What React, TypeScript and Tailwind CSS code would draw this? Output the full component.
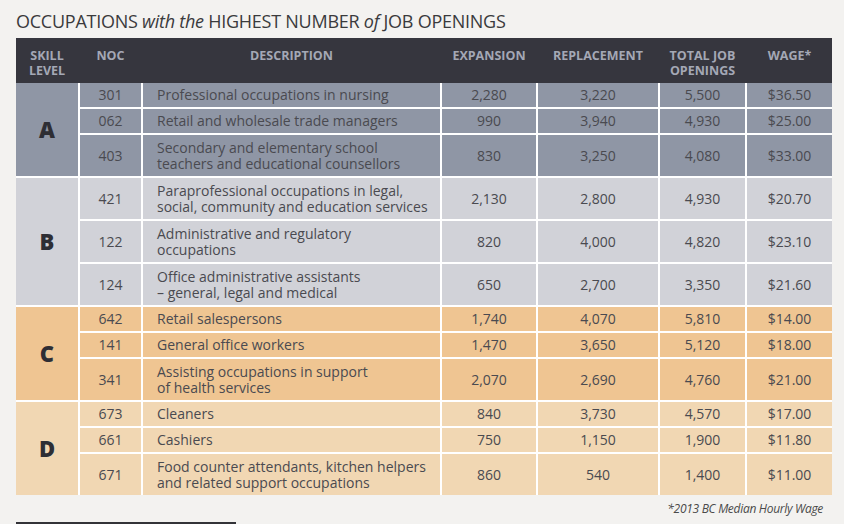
const font = { fontFamily: '"Open Sans", "Liberation Sans", sans-serif' };

type Row = { noc: string; desc: string[]; exp: string; rep: string; total: string; wage: string };

const groups: { level: string; bg: string; rows: Row[] }[] = [
  {
    level: 'A',
    bg: 'bg-[#8f96a5]',
    rows: [
      { noc: '301', desc: ['Professional occupations in nursing'], exp: '2,280', rep: '3,220', total: '5,500', wage: '$36.50' },
      { noc: '062', desc: ['Retail and wholesale trade managers'], exp: '990', rep: '3,940', total: '4,930', wage: '$25.00' },
      { noc: '403', desc: ['Secondary and elementary school', 'teachers and educational counsellors'], exp: '830', rep: '3,250', total: '4,080', wage: '$33.00' },
    ],
  },
  {
    level: 'B',
    bg: 'bg-[#d1d2d8]',
    rows: [
      { noc: '421', desc: ['Paraprofessional occupations in legal,', 'social, community and education services'], exp: '2,130', rep: '2,800', total: '4,930', wage: '$20.70' },
      { noc: '122', desc: ['Administrative and regulatory', 'occupations'], exp: '820', rep: '4,000', total: '4,820', wage: '$23.10' },
      { noc: '124', desc: ['Office administrative assistants', '– general, legal and medical'], exp: '650', rep: '2,700', total: '3,350', wage: '$21.60' },
    ],
  },
  {
    level: 'C',
    bg: 'bg-[#efc592]',
    rows: [
      { noc: '642', desc: ['Retail salespersons'], exp: '1,740', rep: '4,070', total: '5,810', wage: '$14.00' },
      { noc: '141', desc: ['General office workers'], exp: '1,470', rep: '3,650', total: '5,120', wage: '$18.00' },
      { noc: '341', desc: ['Assisting occupations in support', 'of health services'], exp: '2,070', rep: '2,690', total: '4,760', wage: '$21.00' },
    ],
  },
  {
    level: 'D',
    bg: 'bg-[#f1d7b3]',
    rows: [
      { noc: '673', desc: ['Cleaners'], exp: '840', rep: '3,730', total: '4,570', wage: '$17.00' },
      { noc: '661', desc: ['Cashiers'], exp: '750', rep: '1,150', total: '1,900', wage: '$11.80' },
      { noc: '671', desc: ['Food counter attendants, kitchen helpers', 'and related support occupations'], exp: '860', rep: '540', total: '1,400', wage: '$11.00' },
    ],
  },
];

const cols = 'grid-cols-[62px_61px_297px_94px_120px_85px_85px]';

function Cell({ bg, tall, children, left }: { bg: string; tall: boolean; children: React.ReactNode; left?: boolean }) {
  return (
    <div
      className={`${bg} ${tall ? 'h-[41px]' : 'h-[24px]'} flex items-center ${
        left ? 'justify-start pl-[14px]' : 'justify-center'
      } text-[14px] leading-[16px] text-[#4a4a50]`}
    >
      {children}
    </div>
  );
}

export default function App() {
  return (
    <div className="w-[844px] h-[524px] bg-[#f3f2f0] overflow-hidden relative" style={font}>
      <div className="px-4 pt-[9px]">
        <h1 className="text-[18px] leading-[24px] text-[#3a3a3c] tracking-[-0.25px]">
          OCCUPATIONS <i>with the</i> HIGHEST NUMBER <i>of</i> JOB OPENINGS
        </h1>
        <div className="mt-[5px] w-[816px]">
          <div className={`grid ${cols} gap-x-[2px] bg-[#36363e] h-[45px] pt-[10px] text-[12.5px] leading-[15px] font-bold text-[#a4a8b5] text-center`}>
            <div>SKILL<br />LEVEL</div>
            <div>NOC</div>
            <div>DESCRIPTION</div>
            <div>EXPANSION</div>
            <div>REPLACEMENT</div>
            <div>TOTAL JOB<br />OPENINGS</div>
            <div>WAGE*</div>
          </div>
          <div className={`grid ${cols} gap-[2px] bg-white`}>
            {groups.map((g) => (
              <>
                <div
                  key={g.level}
                  className={`${g.bg} row-span-3 flex items-center justify-center text-[22px] font-extrabold text-[#2e2e34]`}
                >
                  {g.level}
                </div>
                {g.rows.map((r) => {
                  const tall = r.desc.length > 1;
                  return (
                    <>
                      <Cell bg={g.bg} tall={tall}>{r.noc}</Cell>
                      <Cell bg={g.bg} tall={tall} left>
                        <div>
                          {r.desc.map((d) => (
                            <div key={d}>{d}</div>
                          ))}
                        </div>
                      </Cell>
                      <Cell bg={g.bg} tall={tall}>{r.exp}</Cell>
                      <Cell bg={g.bg} tall={tall}>{r.rep}</Cell>
                      <Cell bg={g.bg} tall={tall}>{r.total}</Cell>
                      <Cell bg={g.bg} tall={tall}>{r.wage}</Cell>
                    </>
                  );
                })}
              </>
            ))}
          </div>
          <div className="text-right pr-[9px] pt-[5px] text-[12px] italic text-[#4a4a4a] tracking-[-0.3px]">
            *2013 BC Median Hourly Wage
          </div>
        </div>
      </div>
      <div className="absolute left-4 bottom-0 w-[220px] h-[2px] bg-[#333338]" />
    </div>
  );
}
